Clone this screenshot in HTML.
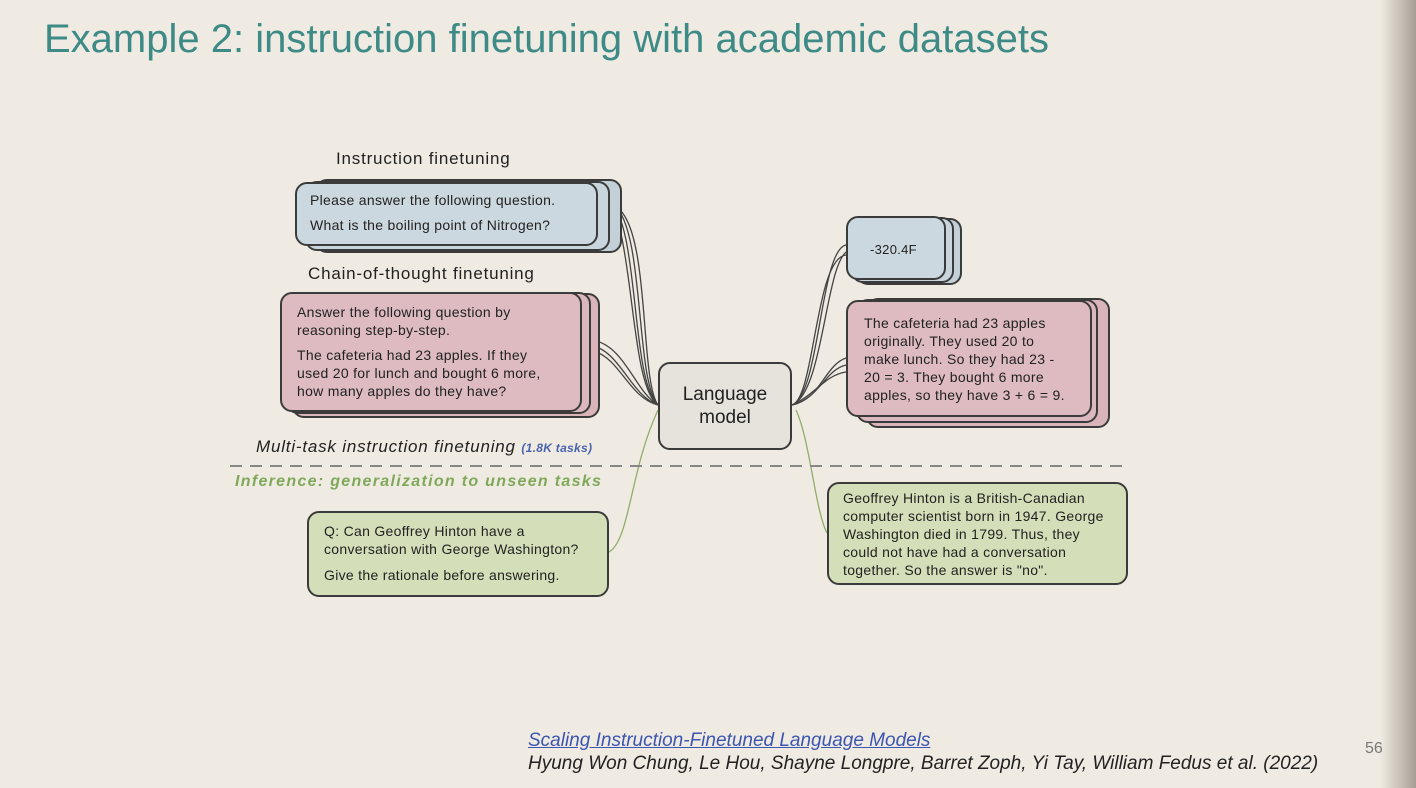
<!DOCTYPE html>
<html><head><meta charset="utf-8"><style>
body{margin:0;width:1416px;height:788px;overflow:hidden;background:#f0ebe2;font-family:"Liberation Sans",sans-serif;position:relative}
.a{position:absolute}
.box{position:absolute;border:2px solid #3b3b3b;border-radius:12px;box-sizing:border-box}
.t{position:absolute;font-size:14px;color:#222;line-height:18px;letter-spacing:0.3px;white-space:nowrap}
.h{font-size:17px;color:#222;letter-spacing:0.8px}
.shade{position:absolute;right:0;top:0;width:36px;height:788px;background:linear-gradient(to right,rgba(240,235,226,0),#b9b2a8 75%,#a59e95)}
</style></head><body>
<div class="a" style="left:44px;top:17px;font-size:40px;color:#3d8a86">Example 2: instruction finetuning with academic datasets</div>

<svg class="a" style="left:0;top:0" width="1416" height="788">
<g fill="none" stroke="#444" stroke-width="1.3">
<path d="M608 200 C640 220,630 380,658 405"/><path d="M614 205 C645 230,635 380,658 405"/><path d="M620 210 C650 240,640 380,658 405"/><path d="M603 195 C635 215,628 385,658 405"/>
<path d="M590 345 C620 350,630 395,658 405"/><path d="M596 352 C620 360,630 398,658 405"/><path d="M592 340 C625 345,635 392,658 405"/>
<path d="M792 405 C820 395,820 250,846 245"/><path d="M792 405 C825 392,825 255,850 250"/><path d="M792 405 C815 398,815 258,846 255"/>
<path d="M792 405 C820 400,825 365,846 358"/><path d="M792 405 C820 398,825 370,846 365"/><path d="M792 405 C815 395,825 375,846 372"/>
</g>
<g fill="none" stroke="#8fae6a" stroke-width="1.3">
<path d="M609 552 C630 540,630 470,658 410"/>
<path d="M796 410 C810 440,815 510,827 533"/>
</g>
<line x1="230" y1="466" x2="1122" y2="466" stroke="#888" stroke-width="2" stroke-dasharray="12,8"/>
</svg>

<div class="a h" style="left:336px;top:149px">Instruction finetuning</div>
<div class="box" style="left:315px;top:179px;width:307px;height:74px;background:#c4d0d8"></div>
<div class="box" style="left:305px;top:181px;width:305px;height:70px;background:#c9d5dc"></div>
<div class="box" style="left:295px;top:182px;width:303px;height:64px;background:#ccd8df"></div>
<div class="t" style="left:310px;top:191px">Please answer the following question.</div>
<div class="t" style="left:310px;top:216px">What is the boiling point of Nitrogen?</div>

<div class="a h" style="left:308px;top:264px">Chain-of-thought finetuning</div>
<div class="box" style="left:292px;top:293px;width:308px;height:125px;background:#d9b5ba"></div>
<div class="box" style="left:286px;top:292px;width:305px;height:122px;background:#dbb8bd"></div>
<div class="box" style="left:280px;top:292px;width:302px;height:120px;background:#ddbbc0"></div>
<div class="t" style="left:297px;top:303px">Answer the following question by<br>reasoning step-by-step.</div>
<div class="t" style="left:297px;top:346px">The cafeteria had 23 apples. If they<br>used 20 for lunch and bought 6 more,<br>how many apples do they have?</div>

<div class="box" style="left:658px;top:362px;width:134px;height:88px;background:#e6e3dc;text-align:center;font-size:19px;line-height:23px;padding-top:19px;color:#222">Language<br>model</div>

<div class="box" style="left:856px;top:218px;width:106px;height:67px;background:#c4d0d8"></div>
<div class="box" style="left:851px;top:217px;width:103px;height:66px;background:#c9d5dc"></div>
<div class="box" style="left:846px;top:216px;width:100px;height:64px;background:#ccd8df"></div>
<div class="t" style="left:870px;top:241px;font-size:13px">-320.4F</div>

<div class="box" style="left:866px;top:298px;width:244px;height:130px;background:#d9b5ba"></div>
<div class="box" style="left:856px;top:299px;width:242px;height:124px;background:#dbb8bd"></div>
<div class="box" style="left:846px;top:300px;width:246px;height:117px;background:#ddbbc0"></div>
<div class="t" style="left:864px;top:314px">The cafeteria had 23 apples<br>originally. They used 20 to<br>make lunch. So they had 23 -<br>20 = 3. They bought 6 more<br>apples, so they have 3 + 6 = 9.</div>

<div class="a h" style="left:256px;top:437px;font-style:italic">Multi-task instruction finetuning <span style="font-size:12px;color:#4a63b0;font-weight:bold;letter-spacing:0.3px">(1.8K tasks)</span></div>
<div class="a" style="left:235px;top:473px;font-size:16px;font-style:italic;color:#7fa85a;font-weight:bold;letter-spacing:1.3px">Inference: generalization to unseen tasks</div>

<div class="box" style="left:307px;top:511px;width:302px;height:86px;background:#d4deb8"></div>
<div class="t" style="left:324px;top:522px">Q: Can Geoffrey Hinton have a<br>conversation with George Washington?</div>
<div class="t" style="left:324px;top:566px">Give the rationale before answering.</div>

<div class="box" style="left:827px;top:482px;width:301px;height:103px;background:#d4deb8"></div>
<div class="t" style="left:843px;top:489px">Geoffrey Hinton is a British-Canadian<br>computer scientist born in 1947. George<br>Washington died in 1799. Thus, they<br>could not have had a conversation<br>together. So the answer is "no".</div>

<div class="a" style="left:528px;top:730px;font-size:19px;font-style:italic;color:#3b55b0;text-decoration:underline">Scaling Instruction-Finetuned Language Models</div>
<div class="a" style="left:528px;top:753px;font-size:19px;font-style:italic;color:#222">Hyung Won Chung, Le Hou, Shayne Longpre, Barret Zoph, Yi Tay, William Fedus et al. (2022)</div>
<div class="a" style="left:1365px;top:740px;font-size:16px;color:#777">56</div>
<div class="shade"></div>
</body></html>
